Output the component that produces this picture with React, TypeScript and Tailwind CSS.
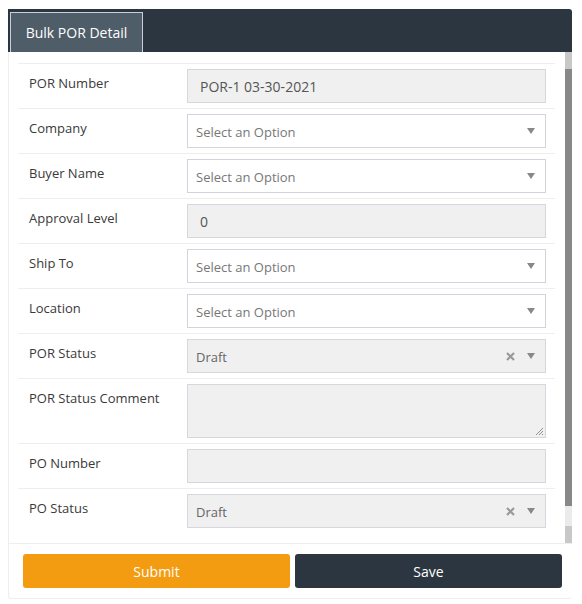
import React from "react";

type Field = {
  label: string;
  kind: "text" | "select" | "status" | "textarea";
  value?: string;
};

const fields: Field[] = [
  { label: "POR Number", kind: "text", value: "POR-1 03-30-2021" },
  { label: "Company", kind: "select" },
  { label: "Buyer Name", kind: "select" },
  { label: "Approval Level", kind: "text", value: "0" },
  { label: "Ship To", kind: "select" },
  { label: "Location", kind: "select" },
  { label: "POR Status", kind: "status", value: "Draft" },
  { label: "POR Status Comment", kind: "textarea" },
  { label: "PO Number", kind: "text", value: "" },
  { label: "PO Status", kind: "status", value: "Draft" },
];

const Caret = () => (
  <svg width="8" height="6" viewBox="0 0 8 6" className="shrink-0">
    <path d="M0 0 L8 0 L4 6 Z" fill="#888" />
  </svg>
);

const Cross = () => (
  <svg width="9" height="9" viewBox="0 0 9 9" className="shrink-0">
    <path d="M1 1 L8 8 M8 1 L1 8" stroke="#999" strokeWidth="2.2" />
  </svg>
);

const Control: React.FC<{ f: Field }> = ({ f }) => {
  if (f.kind === "text") {
    return (
      <div className="w-[359px] h-[34px] bg-[#f0f0f0] border border-[#d6d6de] flex items-center px-3 text-[14px] text-[#555]">
        {f.value}
      </div>
    );
  }
  if (f.kind === "select") {
    return (
      <div className="w-[359px] h-[34px] bg-white border border-[#d3d3de] flex items-center pl-2 pr-[10px] text-[13px] text-[#777]">
        <span className="flex-1 pt-[3px]">Select an Option</span>
        <Caret />
      </div>
    );
  }
  if (f.kind === "status") {
    return (
      <div className="w-[359px] h-[34px] bg-[#f0f0f0] border border-[#d6d6de] flex items-center pl-2 pr-[10px] text-[13px] text-[#666]">
        <span className="flex-1 pt-[3px]">{f.value}</span>
        <Cross />
        <span className="ml-[12px]">
          <Caret />
        </span>
      </div>
    );
  }
  return (
    <div className="relative w-[359px] h-[54px] bg-[#f0f0f0] border border-[#d6d6de]">
      <svg width="9" height="9" viewBox="0 0 9 9" className="absolute right-[1px] bottom-[1px]">
        <path d="M1 8 L8 1 M4 8 L8 4 M7 8 L8 7" stroke="#777" strokeWidth="0.8" />
      </svg>
    </div>
  );
};

const App: React.FC = () => {
  return (
    <div
      className="w-[582px] h-[604px] bg-white pt-[9px] pl-[8px]"
      style={{ fontFamily: '"Open Sans", "Liberation Sans", sans-serif' }}
    >
      <div className="w-[564px]">
        <div className="h-[43px] bg-[#2b3640] rounded-tr-[3px] flex items-end pl-[2px]">
          <div className="h-[40px] w-[133px] bg-[#4e5d68] border border-b-0 border-[#c9d0d5] flex items-center justify-center text-white text-[14px]">
            Bulk POR Detail
          </div>
        </div>

        <div className="flex h-[491px] border-l border-[#eeeeee]">
          <div className="flex-1 pl-[9px] pr-[10px] pt-[11px]">
            {fields.map((f) => (
              <div
                key={f.label}
                className={`flex border-t border-[#eeeeee] ${
                  f.kind === "textarea" ? "h-[65px]" : "h-[45px]"
                }`}
              >
                <div className="w-[169px] pl-[11px] pt-[10px] text-[13px] text-[#3a3a3a]">
                  {f.label}
                </div>
                <div className="pt-[5px]">
                  <Control f={f} />
                </div>
              </div>
            ))}
          </div>
          <div className="w-[7px] flex flex-col">
            <div className="h-[17px] bg-[#c8c8c8]" />
            <div className="h-[437px] bg-[#888888]" />
            <div className="h-[20px] bg-[#ebebeb]" />
            <div className="flex-1 bg-[#c8c8c8]" />
          </div>
        </div>

        <div className="flex gap-[5px] pl-[14px] pr-[10px] pt-[10px] pb-[10px] border-t border-l border-b border-[#eeeeee] rounded-b-[3px]">
          <button className="flex-1 h-[34px] rounded-[3px] bg-[#f39c12] text-white text-[14px]">
            Submit
          </button>
          <button className="flex-1 h-[34px] rounded-[3px] bg-[#2b3640] text-white text-[14px]">
            Save
          </button>
        </div>
      </div>
    </div>
  );
};

export default App;
